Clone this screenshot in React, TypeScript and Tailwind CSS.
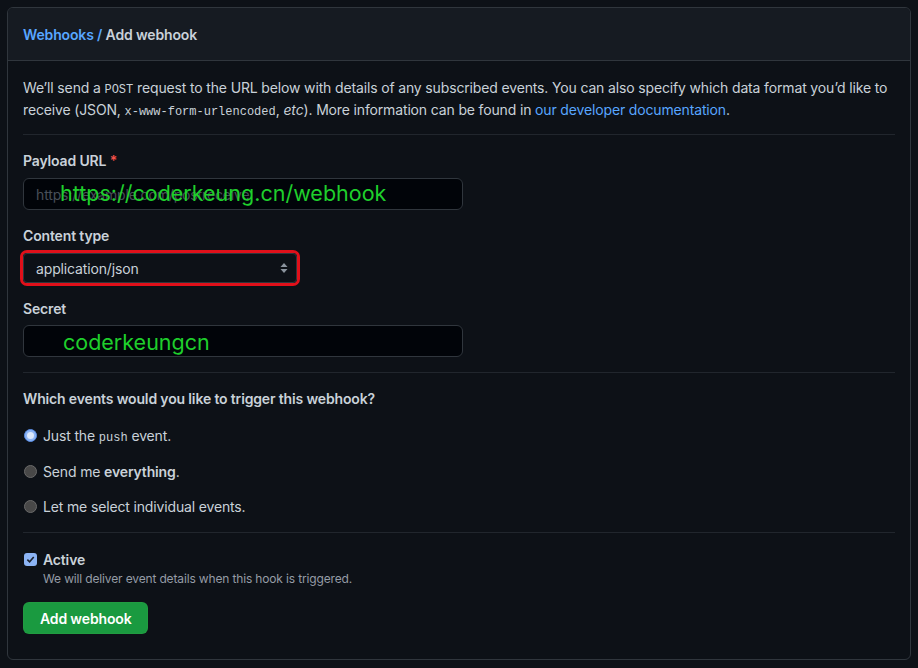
const font = { fontFamily: 'Inter, "Liberation Sans", sans-serif' } as React.CSSProperties;

function Radio({ checked }: { checked?: boolean }) {
  if (checked) {
    return (
      <span className="w-[13px] h-[13px] rounded-full bg-[#8cb4f5] border border-[#5a8ee6] flex items-center justify-center shrink-0">
        <span className="w-[7px] h-[7px] rounded-full bg-[#dbe8fd]" />
      </span>
    );
  }
  return <span className="w-[13px] h-[13px] rounded-full bg-[#484848] border border-[#6a6a6a] shrink-0" />;
}

export default function App() {
  return (
    <div className="min-h-[668px] bg-[#0d1117] p-[7px] text-[14px] text-[#c9d1d9] tracking-[-0.15px]" style={font}>
      <div className="border border-[#30363d] rounded-md overflow-hidden">
        {/* Header */}
        <div className="h-[53px] bg-[#161b22] border-b border-[#30363d] px-[15px] flex items-center">
          <span className="font-semibold text-[14px]">
            <span className="text-[#58a6ff]">Webhooks /</span>
            <span className="text-[#c9d1d9]"> Add webhook</span>
          </span>
        </div>

        {/* Body */}
        <div className="px-[15px] pt-4 pb-[25px]">
          <p className="leading-[22px]">
            We’ll send a <code className="font-mono text-[12px] leading-none tracking-normal">POST</code> request to the URL
            below with details of any subscribed events. You can also specify which data format you’d like to receive
            (JSON, <code className="font-mono text-[12px] leading-none tracking-normal">x-www-form-urlencoded</code>,{' '}
            <em>etc</em>). More information can be found in{' '}
            <span className="text-[#58a6ff]">our developer documentation</span>.
          </p>

          <div className="border-t border-[#21262d] mt-[13px] pt-[15px]">
            <div className="font-semibold leading-[21px]">
              Payload URL <span className="text-[#f85149]">*</span>
            </div>
            <div className="relative mt-[7px] w-[440px] h-[32px] rounded-md border border-[#30363d] bg-[#010409] flex items-center px-3">
              <span className="text-[#484f58] text-[14px]">https://example.com/postreceive</span>
              <span className="absolute left-[36px] top-[-2px] text-[21.5px] text-[#1fcf2c] leading-[32px] tracking-normal">
                https://coderkeung.cn/webhook
              </span>
            </div>

            <div className="font-semibold leading-[21px] mt-[15px]">Content type</div>
            <div className="mt-[4px] -ml-[3px] w-[280px] rounded-[7px] border-[3px] border-[#e0101a]">
              <div className="h-[30px] rounded-[4px] border border-[#30363d] bg-[#0d1117] flex items-center justify-between pl-3 pr-[8px]">
                <span className="text-[14px]">application/json</span>
                <svg width="8" height="12" viewBox="0 0 8 12" className="text-[#8b949e]">
                  <path d="M4 1 L7.5 5 H0.5 Z" fill="currentColor" />
                  <path d="M4 11 L7.5 7 H0.5 Z" fill="currentColor" />
                </svg>
              </div>
            </div>

            <div className="font-semibold leading-[21px] mt-[12px]">Secret</div>
            <div className="relative mt-[6px] w-[440px] h-[32px] rounded-md border border-[#30363d] bg-[#010409]">
              <span className="absolute left-[39px] top-[0px] text-[21.5px] text-[#1fcf2c] leading-[32px] tracking-normal">
                coderkeungcn
              </span>
            </div>
          </div>

          <div className="border-t border-[#21262d] mt-[15px] pt-[15px]">
            <div className="font-semibold leading-[21px]">Which events would you like to trigger this webhook?</div>
            <div className="flex flex-col gap-[14.5px] mt-4">
              <div className="flex items-center gap-[6px] h-[21px] pl-px">
                <Radio checked />
                <span>
                  Just the <code className="font-mono text-[12px] leading-none tracking-normal">push</code> event.
                </span>
              </div>
              <div className="flex items-center gap-[6px] h-[21px] pl-px">
                <Radio />
                <span>
                  Send me <strong className="font-semibold">everything</strong>.
                </span>
              </div>
              <div className="flex items-center gap-[6px] h-[21px] pl-px">
                <Radio />
                <span>Let me select individual events.</span>
              </div>
            </div>
          </div>

          <div className="border-t border-[#21262d] mt-[15px] pt-4">
            <div className="flex items-center gap-[6px] h-[21px] pl-px">
              <span className="w-[13px] h-[13px] rounded-[3px] bg-[#8cb4f5] flex items-center justify-center shrink-0">
                <svg width="9" height="9" viewBox="0 0 10 10">
                  <path d="M1.5 5.2 L4 7.6 L8.6 2.2" stroke="#1b2330" strokeWidth="1.8" fill="none" />
                </svg>
              </span>
              <span className="font-semibold">Active</span>
            </div>
            <div className="pl-[20px] text-[12px] text-[#959ca6] leading-[18px]">
              We will deliver event details when this hook is triggered.
            </div>
            <div className="mt-[14px]">
              <button className="h-[32px] px-4 rounded-md bg-[#1a9a40] border border-[#2ea043]/40 text-white font-semibold text-[14px]">
                Add webhook
              </button>
            </div>
          </div>
        </div>
      </div>
    </div>
  );
}
